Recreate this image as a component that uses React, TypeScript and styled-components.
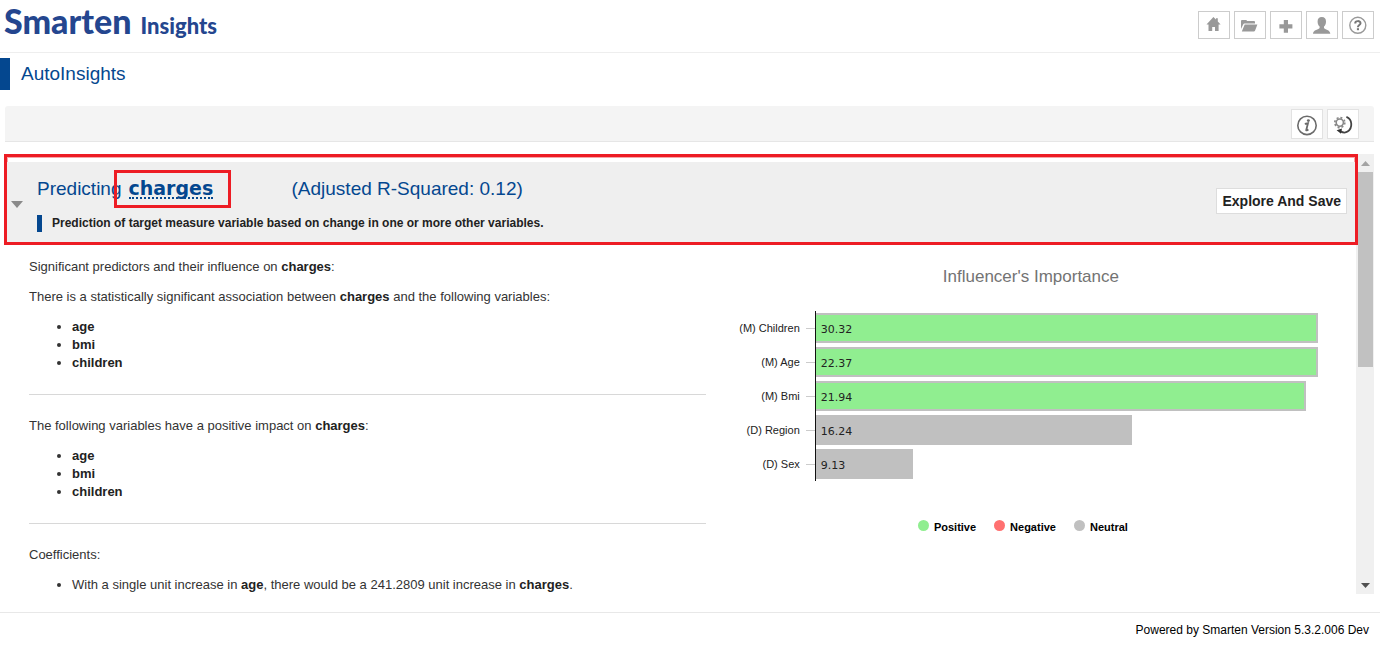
import React from "react";
import styled, { createGlobalStyle } from "styled-components";

const GlobalStyle = createGlobalStyle`
  *, *::before, *::after { box-sizing: border-box; }
  body {
    margin: 0;
    background: #fff;
    color: #333;
    font-family: "Liberation Sans", Arial, sans-serif;
    font-size: 13px;
    line-height: 18px;
  }
  button { font-family: inherit; cursor: pointer; }
`;

const navy = "#04478f";
const annotationRed = "#ed1c24";

const Page = styled.div`
  display: flex;
  flex-direction: column;
  min-height: 100vh;
`;

const Header = styled.header`
  display: flex;
  justify-content: space-between;
  align-items: center;
  height: 53px;
  padding: 0 6px 2px 4px;
  border-bottom: 1px solid #eee;
`;

const Logo = styled.a`
  display: flex;
  align-items: baseline;
  gap: 9px;
  padding-bottom: 4px;
  color: #24468f;
  font-family: Lato, "Open Sans", sans-serif;
  font-weight: 900;
  font-size: 34px;
  line-height: 44px;
  text-decoration: none;
`;

const LogoSuffix = styled.span`
  font-size: 22px;
`;

const ButtonGroup = styled.div`
  display: flex;
  gap: 4px;
`;

const IconButton = styled.button<{ $tall?: boolean }>`
  display: flex;
  align-items: center;
  justify-content: center;
  width: 32px;
  height: ${(p) => (p.$tall ? 30 : 28)}px;
  padding: 0;
  border: 1px solid ${(p) => (p.$tall ? "#e2e2e2" : "#ccc")};
  background: #fff;
  color: ${(p) => (p.$tall ? "#6b6b6b" : "#999")};
`;

const TitleRow = styled.div`
  display: flex;
  align-items: center;
  margin-top: 5px;
  height: 32px;
  border-left: 10px solid ${navy};
  padding-left: 11px;
`;

const PageTitle = styled.h1`
  margin: 0;
  color: ${navy};
  font-weight: 400;
  font-size: 19px;
  line-height: 32px;
`;

const Toolbar = styled.div`
  display: flex;
  justify-content: flex-end;
  align-items: center;
  margin: 16px 6px 0 5px;
  height: 36px;
  padding-right: 15px;
  border-bottom: 1px solid #e6e6e6;
  border-radius: 3px 3px 0 0;
  background: #f4f4f4;
`;

const Workspace = styled.div`
  display: flex;
  margin: 12px 6px 18px 4px;
`;

const Pane = styled.main`
  flex: 1;
  min-width: 0;
`;

const Highlight = styled.section`
  position: relative;
  z-index: 1;
  margin-right: -2px;
  padding-top: 5px;
  border: 3px solid ${annotationRed};
  box-shadow: inset 0 0 0 1px #f7a5a8;
`;

const Banner = styled.div`
  display: flex;
  align-items: center;
  height: 80px;
  padding: 0 8px 2px 4px;
  background: #efefef;
`;

const Toggle = styled.button`
  display: flex;
  padding: 6px 0 0;
  border: 0;
  background: none;
  color: #8a8a8a;
`;

const BannerText = styled.div`
  flex: 1;
  margin-left: 14px;
`;

const Headline = styled.h2`
  display: flex;
  align-items: center;
  margin: 0;
  height: 38px;
  color: ${navy};
  font-weight: 400;
  font-size: 19px;
`;

const TargetBox = styled.span`
  display: flex;
  align-items: center;
  height: 38px;
  width: 117px;
  margin: 0 61px 0 -8px;
  padding-left: 12px;
  border: 3px solid ${annotationRed};
`;

const Target = styled.a`
  border-bottom: 2px dotted ${navy};
  color: ${navy};
  font-family: "DejaVu Sans", Verdana, sans-serif;
  font-weight: 700;
  font-size: 19px;
  line-height: 17px;
  text-decoration: none;
`;

const Subline = styled.p`
  margin: 7px 0 0;
  padding-left: 10px;
  border-left: 5px solid ${navy};
  color: #222;
  font-weight: 700;
  font-size: 12px;
  line-height: 17px;
`;

const ExploreButton = styled.button`
  height: 26px;
  padding: 0 5px;
  border: 1px solid #ddd;
  background: #fff;
  color: #222;
  font-weight: 700;
  font-size: 14px;
`;

const Columns = styled.div`
  display: grid;
  grid-template-columns: 51fr 49fr;
  padding-left: 25px;
`;

const Findings = styled.div`
  padding-top: 13px;
`;

const Finding = styled.section`
  & + & {
    margin-top: 22px;
    padding-top: 22px;
    border-top: 1px solid #d8d8d8;
  }
`;

const Para = styled.p`
  margin: 0 0 12px;
`;

const List = styled.ul`
  margin: 0;
  padding-left: 43px;
`;

const Strong = styled.strong`
  color: #222;
`;

const ChartPanel = styled.figure`
  margin: 0;
  padding: 21px 38px 0 0;
`;

const ChartTitle = styled.figcaption`
  margin-right: -38px;
  color: #737373;
  font-size: 17px;
  line-height: 22px;
  text-align: center;
`;

const Bars = styled.div`
  margin-top: 23px;
`;

const BarRow = styled.div`
  display: grid;
  grid-template-columns: 94px 9px 1fr;
  column-gap: 6px;
  align-items: center;
  height: 34px;
`;

const BarLabel = styled.span`
  color: #222;
  font-size: 11px;
  text-align: right;
`;

const Tick = styled.span`
  height: 1px;
  background: #ccc;
`;

const Track = styled.div`
  display: flex;
  align-items: center;
  height: 34px;
  margin-left: -6px;
  border-left: 1px solid #111;
`;

const Bar = styled.div<{ $tone: Tone }>`
  height: 30px;
  padding-left: 5px;
  border: 2px solid #c0c0c0;
  border-left: 0;
  background: ${(p) => tones[p.$tone]};
  color: #222;
  font-family: "DejaVu Sans", Verdana, sans-serif;
  font-size: 11px;
  line-height: 29px;
`;

const Legend = styled.div`
  display: flex;
  justify-content: center;
  gap: 18px;
  margin: 35px 0 0 22px;
`;

const LegendItem = styled.span`
  display: flex;
  gap: 5px;
  color: #000;
  font-weight: 700;
  font-size: 11px;
  line-height: 22px;
`;

const Dot = styled.i<{ $tone: Tone }>`
  width: 11px;
  height: 11px;
  margin-top: 4px;
  border-radius: 50%;
  background: ${(p) => tones[p.$tone]};
`;

const ScrollTrack = styled.div`
  display: flex;
  flex-direction: column;
  width: 18px;
  height: 440px;
  background: #f0f0f0;
`;

const ScrollArrow = styled.button<{ $active?: boolean }>`
  display: flex;
  align-items: center;
  justify-content: center;
  height: 18px;
  padding: 0;
  border: 0;
  background: none;
  color: ${(p) => (p.$active ? "#505050" : "#a3a3a3")};
`;

const ScrollSpace = styled.div`
  flex: 1;
  padding: 0 1px 0 2px;
`;

const ScrollThumb = styled.div`
  height: 195px;
  background: #c1c1c1;
`;

const Footer = styled.footer`
  padding: 8px 11px 8px 0;
  border-top: 1px solid #e8e8e8;
  color: #000;
  font-size: 12px;
  text-align: right;
`;

type Tone = "positive" | "negative" | "neutral";

const tones: Record<Tone, string> = {
  positive: "#90ee90",
  negative: "#ff7070",
  neutral: "#c0c0c0",
};

const influencers: { label: string; value: string; width: number; tone: Tone }[] = [
  { label: "(M) Children", value: "30.32", width: 100, tone: "positive" },
  { label: "(M) Age", value: "22.37", width: 100, tone: "positive" },
  { label: "(M) Bmi", value: "21.94", width: 97.6, tone: "positive" },
  { label: "(D) Region", value: "16.24", width: 62.9, tone: "neutral" },
  { label: "(D) Sex", value: "9.13", width: 19.3, tone: "neutral" },
];

const predictors = ["age", "bmi", "children"];

const Glyph = ({ children }: { children: React.ReactNode }) => (
  <svg width="24" height="24" viewBox="0 0 24 24" fill="currentColor" aria-hidden="true">
    {children}
  </svg>
);

const HomeIcon = () => (
  <Glyph>
    <path d="M11.4 4 L14 6.6 V5.2 H15.8 V8.4 L18.6 11.4 H16.6 V18 H13 V14 H10.2 V18 H6.5 V11.4 H4.5 Z" />
  </Glyph>
);

const FolderIcon = () => (
  <Glyph>
    <path d="M3 8 Q3 7 4 7 H8 Q8.8 7 9 8 H16 Q17 8 17 9 V10.6 H6.4 Q5.6 10.6 5.2 11.4 L3 16 Z" />
    <path d="M6.7 11.4 H19.4 L17 17.8 Q16.7 18.6 15.8 18.6 H3.8 Z" />
  </Glyph>
);

const PlusIcon = () => (
  <Glyph>
    <path d="M9.8 7 H14 V11.2 H18.4 V15.4 H14 V19.8 H9.8 V15.4 H5.4 V11.2 H9.8 Z" />
  </Glyph>
);

const UserIcon = () => (
  <Glyph>
    <path d="M11.8 4 C14.6 4 16 5.6 16 8.4 C16 10.8 15.2 12.4 14 13.6 V15 C14.6 16.4 20.3 16.8 20.3 20.8 H3 C3 16.8 9 16.4 9.6 15 V13.6 C8.4 12.4 7.6 10.8 7.6 8.4 C7.6 5.6 9 4 11.8 4 Z" />
  </Glyph>
);

const HelpIcon = () => (
  <Glyph>
    <circle cx="11.8" cy="12.3" r="8" fill="none" stroke="currentColor" strokeWidth="1.4" />
    <path d="M9.2 10.4 C9.2 7.4 14.5 7.4 14.5 10.2 C14.5 12 11.9 12 11.9 14.2" fill="none" stroke="#777" strokeWidth="2" />
    <rect x="10.9" y="15.2" width="2.1" height="2" fill="#777" />
  </Glyph>
);

const InfoIcon = () => (
  <Glyph>
    <circle cx="12" cy="13.4" r="9.2" fill="none" stroke="currentColor" strokeWidth="1.6" />
    <ellipse cx="13.4" cy="8.6" rx="1.5" ry="1.3" />
    <path d="M9.8 11.8 L13 11.2 L11.2 18.2 Q11.2 18.9 13.4 17.4" fill="none" stroke="currentColor" strokeWidth="1.8" />
  </Glyph>
);

const RefreshIcon = () => (
  <Glyph>
    <circle cx="8.8" cy="10.6" r="3.6" fill="none" stroke="#888" strokeWidth="1.6" />
    <circle cx="8.8" cy="10.6" r="5" fill="none" stroke="#888" strokeWidth="1.7" strokeDasharray="2 1.93" />
    <path d="M15.4 4.8 C21.6 7.2 21.8 16 16.6 19.6 Q13.6 21.6 9.6 19.4" fill="none" stroke="#444" strokeWidth="1.8" />
    <path d="M5.6 18.2 L11 16.6 L10 21.8 Z" fill="#333" />
  </Glyph>
);

const Triangle = ({ up, width, height }: { up?: boolean; width: number; height: number }) => (
  <svg width={width} height={height} viewBox="0 0 12 6" preserveAspectRatio="none" fill="currentColor" aria-hidden="true">
    <path d={up ? "M0 6 L6 0 L12 6 Z" : "M0 0 H12 L6 6 Z"} />
  </svg>
);

const PredictorList = () => (
  <List>
    {predictors.map((name) => (
      <li key={name}>
        <Strong>{name}</Strong>
      </li>
    ))}
  </List>
);

export default function App() {
  return (
    <>
      <GlobalStyle />
      <Page>
        <Header>
          <Logo href="#">
            Smarten <LogoSuffix>Insights</LogoSuffix>
          </Logo>
          <ButtonGroup>
            <IconButton aria-label="Home"><HomeIcon /></IconButton>
            <IconButton aria-label="Open"><FolderIcon /></IconButton>
            <IconButton aria-label="New"><PlusIcon /></IconButton>
            <IconButton aria-label="Account"><UserIcon /></IconButton>
            <IconButton aria-label="Help"><HelpIcon /></IconButton>
          </ButtonGroup>
        </Header>
        <TitleRow>
          <PageTitle>AutoInsights</PageTitle>
        </TitleRow>
        <Toolbar>
          <ButtonGroup>
            <IconButton $tall aria-label="Information"><InfoIcon /></IconButton>
            <IconButton $tall aria-label="Refresh settings"><RefreshIcon /></IconButton>
          </ButtonGroup>
        </Toolbar>
        <Workspace>
          <Pane>
            <Highlight>
              <Banner>
                <Toggle aria-label="Collapse">
                  <Triangle width={12} height={7} />
                </Toggle>
                <BannerText>
                  <Headline>
                    Predicting
                    <TargetBox>
                      <Target href="#">charges</Target>
                    </TargetBox>
                    (Adjusted R-Squared: 0.12)
                  </Headline>
                  <Subline>
                    Prediction of target measure variable based on change in one or more other variables.
                  </Subline>
                </BannerText>
                <ExploreButton>Explore And Save</ExploreButton>
              </Banner>
            </Highlight>
            <Columns>
              <Findings>
                <Finding>
                  <Para>
                    Significant predictors and their influence on <Strong>charges</Strong>:
                  </Para>
                  <Para>
                    There is a statistically significant association between <Strong>charges</Strong> and the
                    following variables:
                  </Para>
                  <PredictorList />
                </Finding>
                <Finding>
                  <Para>
                    The following variables have a positive impact on <Strong>charges</Strong>:
                  </Para>
                  <PredictorList />
                </Finding>
                <Finding>
                  <Para>Coefficients:</Para>
                  <List>
                    <li>
                      With a single unit increase in <Strong>age</Strong>, there would be a 241.2809 unit
                      increase in <Strong>charges</Strong>.
                    </li>
                  </List>
                </Finding>
              </Findings>
              <ChartPanel>
                <ChartTitle>Influencer's Importance</ChartTitle>
                <Bars>
                  {influencers.map((item) => (
                    <BarRow key={item.label}>
                      <BarLabel>{item.label}</BarLabel>
                      <Tick />
                      <Track>
                        <Bar $tone={item.tone} style={{ width: `${item.width}%` }}>
                          {item.value}
                        </Bar>
                      </Track>
                    </BarRow>
                  ))}
                </Bars>
                <Legend>
                  <LegendItem><Dot $tone="positive" />Positive</LegendItem>
                  <LegendItem><Dot $tone="negative" />Negative</LegendItem>
                  <LegendItem><Dot $tone="neutral" />Neutral</LegendItem>
                </Legend>
              </ChartPanel>
            </Columns>
          </Pane>
          <ScrollTrack>
            <ScrollArrow aria-label="Scroll up"><Triangle up width={9} height={5} /></ScrollArrow>
            <ScrollSpace>
              <ScrollThumb />
            </ScrollSpace>
            <ScrollArrow $active aria-label="Scroll down"><Triangle width={9} height={5} /></ScrollArrow>
          </ScrollTrack>
        </Workspace>
        <Footer>Powered by Smarten Version 5.3.2.006 Dev</Footer>
      </Page>
    </>
  );
}
